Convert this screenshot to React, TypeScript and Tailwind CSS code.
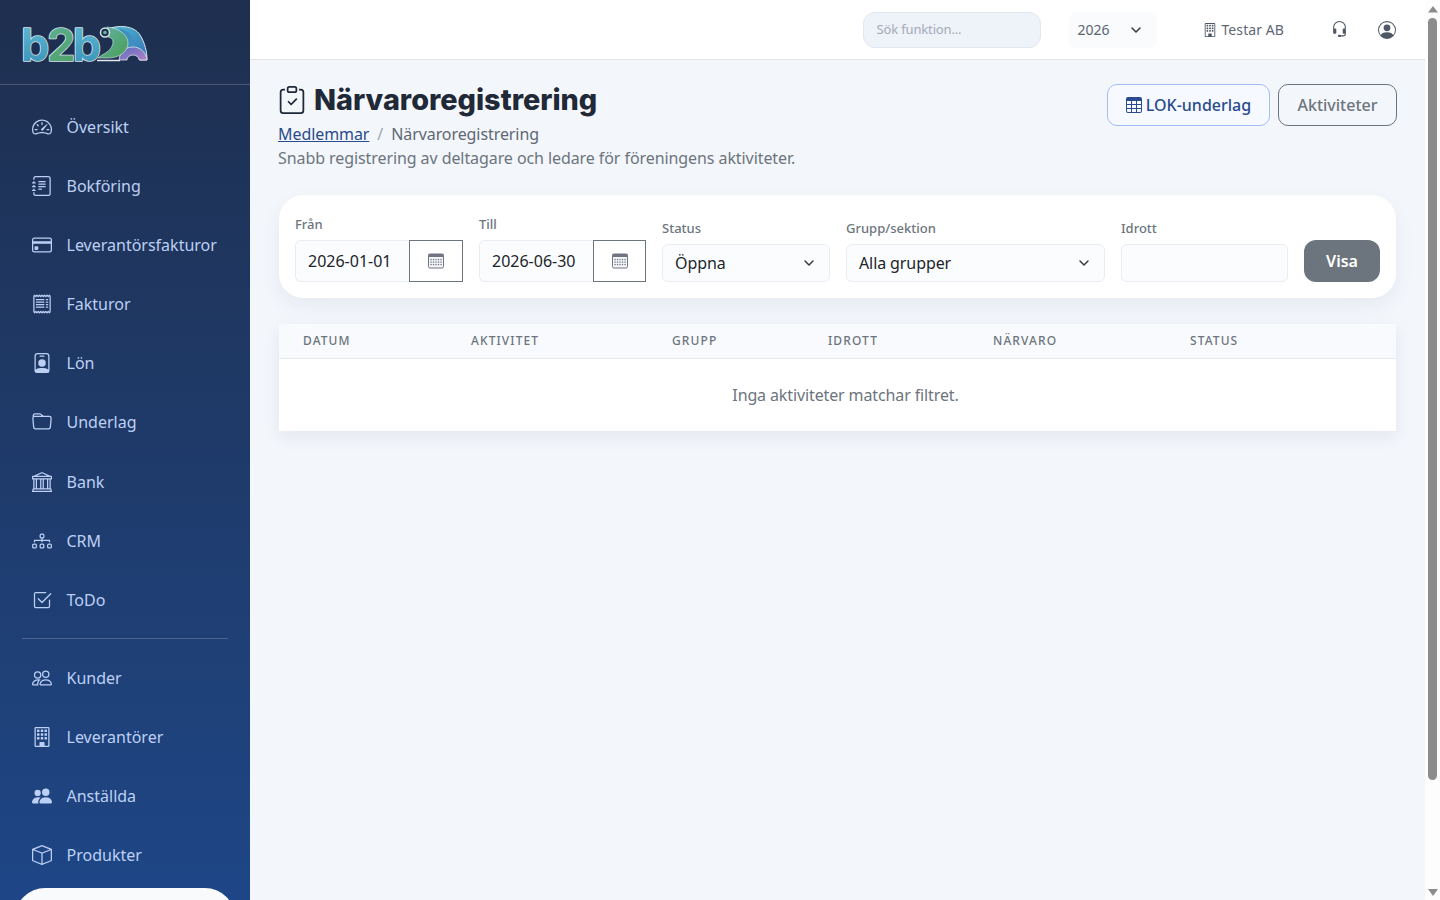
import { ChevronDown } from 'lucide-react';
import {
  BsSpeedometer2,
  BsJournalText,
  BsCreditCard,
  BsReceipt,
  BsPersonBadge,
  BsFolder,
  BsBank,
  BsDiagram3,
  BsCheck2Square,
  BsPeople,
  BsBuilding,
  BsPeopleFill,
  BsBox,
  BsTable,
  BsClipboardCheck,
  BsPersonCircle,
  BsHeadset,
} from 'react-icons/bs';

const mainMenu = [
  { label: 'Översikt', icon: BsSpeedometer2 },
  { label: 'Bokföring', icon: BsJournalText },
  { label: 'Leverantörsfakturor', icon: BsCreditCard },
  { label: 'Fakturor', icon: BsReceipt },
  { label: 'Lön', icon: BsPersonBadge },
  { label: 'Underlag', icon: BsFolder },
  { label: 'Bank', icon: BsBank },
  { label: 'CRM', icon: BsDiagram3 },
  { label: 'ToDo', icon: BsCheck2Square },
];

const registerMenu = [
  { label: 'Kunder', icon: BsPeople },
  { label: 'Leverantörer', icon: BsBuilding },
  { label: 'Anställda', icon: BsPeopleFill },
  { label: 'Produkter', icon: BsBox },
];

const columns = [
  { label: 'DATUM', width: 'w-[168px]' },
  { label: 'AKTIVITET', width: 'w-[201px]' },
  { label: 'GRUPP', width: 'w-[156px]' },
  { label: 'IDROTT', width: 'w-[165px]' },
  { label: 'NÄRVARO', width: 'w-[197px]' },
  { label: 'STATUS', width: 'flex-1' },
];

const Logo = () => (
  <svg width="128" height="72" viewBox="0 -14 128 72" className="-mt-[14px] block">
    <defs>
      <linearGradient id="logoBlue" x1="0" y1="0" x2="0" y2="1">
        <stop offset="0" stopColor="#62bdd6" />
        <stop offset="1" stopColor="#378fb6" />
      </linearGradient>
      <linearGradient id="logoGreen" x1="0" y1="0" x2="1" y2="1">
        <stop offset="0" stopColor="#62b4a8" />
        <stop offset="1" stopColor="#4a9c55" />
      </linearGradient>
      <linearGradient id="logoBody" x1="0" y1="0" x2="1" y2="1">
        <stop offset="0" stopColor="#4dbcd2" />
        <stop offset="1" stopColor="#3670b6" />
      </linearGradient>
      <linearGradient id="logoLeg" x1="0" y1="0" x2="1" y2="1">
        <stop offset="0" stopColor="#5a6fc0" />
        <stop offset="1" stopColor="#b07fc8" />
      </linearGradient>
    </defs>
    <text
      x="-1"
      y="36.5"
      fontFamily="Inter, sans-serif"
      fontWeight="700"
      fontSize="45"
      letterSpacing="-2.5"
      stroke="#dce6ea"
      strokeWidth="1.6"
      strokeLinejoin="round"
      paintOrder="stroke"
    >
      <tspan fill="url(#logoBlue)">b</tspan>
      <tspan fill="url(#logoGreen)">2</tspan>
      <tspan fill="url(#logoBlue)">b</tspan>
    </text>
    <path d="M75 36.5 H98" stroke="#e4e8ea" strokeWidth="1.5" />
    <path d="M86 5 C95 1 112 1 118 11 C123 19 125 28 125 36 L118 36 C116 28 108 24 100 26 L94 10 Z" fill="url(#logoBody)" stroke="#dfe7ea" strokeWidth="1" />
    <path d="M98 5 C107 6 115 15 111 25 C106 24 102 25 100 26 L94 10 Z" fill="#3f8fc0" />
    <path d="M97 36 C98 27 104 23 111 23 C118 23 124 28 125 36 L117 36 A6 5 0 0 0 105 36 Z" fill="url(#logoLeg)" stroke="#dfe7ea" strokeWidth="0.8" />
    <path d="M85 3 C97 4 106 11 106 19 C106 28 97 34 86 34 L76 34 C80 30 86 29 89 24 C92 19 92 14 86 13 Z" fill="url(#logoGreen)" stroke="#dfe7ea" strokeWidth="0.6" />
    <circle cx="83" cy="8.5" r="4.5" fill="#1f3150" stroke="#d7e6e8" strokeWidth="1.5" />
    <circle cx="83" cy="8.5" r="1.8" fill="#69b7a0" />
  </svg>
);

const Sidebar = () => (
  <aside className="flex h-screen w-[250px] shrink-0 flex-col overflow-hidden bg-gradient-to-b from-[#1e2f4f] to-[#1e4686]">
    <div className="h-[85px] shrink-0 border-b border-white/20 pl-[22px] pt-[24px]">
      <Logo />
    </div>
    <nav className="flex flex-col gap-[11.1px] pt-[18px]">
      {mainMenu.map(({ label, icon: Icon }) => (
        <a key={label} href="#" className="flex h-[48px] shrink-0 items-center gap-[14.5px] pl-[32px] text-[16px] text-[#bdd0f4]">
          <Icon className="size-[20px]" />
          <span>{label}</span>
        </a>
      ))}
    </nav>
    <div className="mx-[22px] mb-[15px] mt-[14px] border-t border-white/20" />
    <nav className="flex flex-col gap-[11px]">
      {registerMenu.map(({ label, icon: Icon }) => (
        <a key={label} href="#" className="flex h-[48px] shrink-0 items-center gap-[14.5px] pl-[32px] text-[16px] text-[#bdd0f4]">
          <Icon className="size-[20px]" />
          <span>{label}</span>
        </a>
      ))}
    </nav>
    <div className="mx-[15px] mt-[9px] h-[40px] shrink-0 rounded-t-[30px] bg-[#f8fafc]" />
  </aside>
);

const Topbar = () => (
  <header className="flex h-[60px] items-center justify-end border-b border-[#dfe3e8] bg-white pr-[29px]">
    <div className="flex h-[36px] w-[178px] items-center rounded-[12px] border border-[#e2e6ee] bg-[#eef2f9] px-[12px] text-[13px] tracking-[-0.15px] text-[#a3abb8]">
      Sök funktion...
    </div>
    <div className="ml-[28px] flex h-[36px] w-[88px] items-center justify-between rounded-[8px] bg-[#f9fbfd] pl-[8px] pr-[13px] text-[14px] text-[#5b6470]">
      2026
      <ChevronDown className="size-[16px] text-[#343a40]" strokeWidth={2.2} />
    </div>
    <div className="ml-[46px] flex items-center gap-[4px] text-[14px] tracking-[0.08px] text-[#5f6873]">
      <BsBuilding className="size-[14px] text-[#4f5864]" />
      Testar AB
    </div>
    <BsHeadset className="ml-[47px] size-[17px] text-[#4f5864]" />
    <BsPersonCircle className="ml-[30px] size-[18px] text-[#4f5864]" />
  </header>
);

const CalendarGlyph = () => (
  <svg width="16" height="16" viewBox="0 0 16 16">
    <rect x="0.5" y="1" width="15" height="14" rx="1.5" fill="#f3f5f8" stroke="#6f7681" />
    <rect x="0.5" y="1" width="15" height="3" fill="#6f7681" />
    {[3, 5.5, 8, 10.5, 13].map((x) =>
      [6.5, 9, 11.5].map((y) => <rect key={`${x}-${y}`} x={x - 0.6} y={y - 0.6} width="1.3" height="1.3" fill="#6f7681" />),
    )}
  </svg>
);

const DateField = ({ label, value, addon }: { label: string; value: string; addon: string }) => (
  <div className="flex flex-col">
    <label className="mb-[7px] text-[13px] font-medium leading-[18px] text-[#6c757d]">{label}</label>
    <div className="flex h-[42px]">
      <div className="flex flex-1 items-center rounded-l-[6px] border border-r-0 border-[#e9ecf3] bg-[#fbfcfe] pl-[12px] text-[16px] text-[#212529]">
        {value}
      </div>
      <div className={`flex items-center justify-center border border-[#6c757d] ${addon}`}>
        <CalendarGlyph />
      </div>
    </div>
  </div>
);

const SelectField = ({ label, value, width }: { label: string; value: string; width: string }) => (
  <div className={`flex flex-col ${width}`}>
    <label className="mb-[7px] text-[13px] font-medium leading-[18px] text-[#6c757d]">{label}</label>
    <div className="flex h-[38px] items-center justify-between rounded-[6px] border border-[#e9ecf3] bg-[#fbfcfe] pl-[12px] pr-[12px] text-[16px] tracking-[-0.1px] text-[#212529]">
      {value}
      <ChevronDown className="size-[16px] text-[#343a40]" strokeWidth={2.2} />
    </div>
  </div>
);

const Scrollbar = () => (
  <div className="flex h-screen w-[15px] shrink-0 flex-col items-center bg-[#fdfdfd]">
    <svg width="10" height="18" viewBox="0 0 10 18" className="shrink-0">
      <path d="M5 6 L10 12.5 H0 Z" fill="#8c8c8c" />
    </svg>
    <div className="h-[762px] w-[9px] shrink-0 rounded-full bg-[#8c8c8c]" />
    <div className="flex-1" />
    <svg width="10" height="18" viewBox="0 0 10 18" className="shrink-0">
      <path d="M0 7 H10 L5 14 Z" fill="#8c8c8c" />
    </svg>
  </div>
);

export default function App() {
  return (
    <div className="flex h-screen overflow-hidden bg-[#f3f6fb] font-['Noto_Sans',sans-serif]">
      <Sidebar />
      <div className="min-w-0 flex-1">
        <Topbar />
        <main className="px-[28px] pt-[24px] tracking-[-0.08px]">
          <div className="flex items-start justify-between">
            <div>
              <h1 className="flex h-[32px] items-center gap-[8px] font-['Inter',sans-serif] text-[28.8px] font-extrabold leading-none tracking-normal text-[#1f2937]">
                <BsClipboardCheck className="size-[28px]" />
                Närvaroregistrering
              </h1>
              <div className="mt-[6px] flex h-[24px] items-center text-[16px] text-[#5f6873]">
                <a href="#" className="text-[#2a4b8d] underline">Medlemmar</a>
                <span className="px-[8px] text-[#a0a7b0]">/</span>
                <span>Närvaroregistrering</span>
              </div>
              <p className="h-[24px] text-[16px] leading-[24px] text-[#6c757d]">
                Snabb registrering av deltagare och ledare för föreningens aktiviteter.
              </p>
            </div>
            <div className="flex gap-[8px]">
              <button className="flex h-[42px] w-[163px] items-center justify-center gap-[4px] rounded-[10px] border border-[#a3bcf5] bg-[#f6f9ff] text-[16px] font-medium tracking-normal text-[#2a4b8d]">
                <BsTable className="size-[16px]" />
                LOK-underlag
              </button>
              <button className="h-[42px] w-[119px] rounded-[10px] border border-[#6c757d] text-[16px] font-medium tracking-normal text-[#6c757d]">
                Aktiviteter
              </button>
            </div>
          </div>

          <section className="mx-px mt-[25px] flex h-[103px] items-end gap-[16px] rounded-[24px] border border-white bg-white px-[15px] pb-[15px] tracking-normal shadow-[0_8px_20px_rgba(30,50,90,0.06)]">
            <div className="w-[168px]"><DateField label="Från" value="2026-01-01" addon="w-[54px]" /></div>
            <div className="w-[167px]"><DateField label="Till" value="2026-06-30" addon="w-[53px]" /></div>
            <SelectField label="Status" value="Öppna" width="w-[168px]" />
            <SelectField label="Grupp/sektion" value="Alla grupper" width="w-[259px]" />
            <div className="flex w-[167px] flex-col">
              <label className="mb-[7px] text-[13px] font-medium leading-[18px] text-[#6c757d]">Idrott</label>
              <div className="h-[38px] rounded-[6px] border border-[#e9ecf3] bg-[#fbfcfe]" />
            </div>
            <button className="h-[42px] w-[76px] rounded-[12px] bg-[#6c757d] text-[16px] font-semibold text-white">Visa</button>
          </section>

          <section className="mx-px mt-[26px] bg-white shadow-[0_6px_16px_rgba(30,50,90,0.07)]">
            <div className="flex h-[35px] items-center border-b border-[#e6e9f0] bg-[#f8fafd] pl-[24px]">
              {columns.map((col) => (
                <div key={col.label} className={`${col.width} text-[12px] font-medium tracking-[1.1px] text-[#6c757d]`}>
                  {col.label}
                </div>
              ))}
            </div>
            <div className="flex h-[72px] items-center justify-center pl-[16px] text-[16px] tracking-[-0.12px] text-[#6c757d]">
              Inga aktiviteter matchar filtret.
            </div>
          </section>
        </main>
      </div>
      <Scrollbar />
    </div>
  );
}
